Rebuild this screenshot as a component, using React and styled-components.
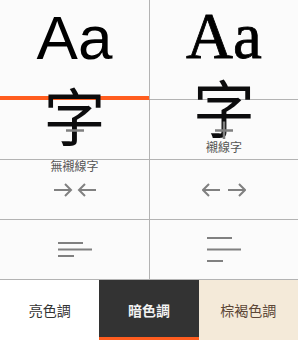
import React from "react";
import styled, { createGlobalStyle } from "styled-components";

const Global = createGlobalStyle`
  html, body { margin: 0; padding: 0; background: #fbfbfb; }
  body { font-family: "Noto Sans CJK TC", "Liberation Sans", sans-serif; }
  * { box-sizing: border-box; }
`;

const ORANGE = "#ff5d1f";
const LINE = "#b3b3b3";
const ICON = "#808080";

const Panel = styled.div`
  width: 298px;
  height: 340px;
  background: #fbfbfb;
  display: flex;
  flex-direction: column;
`;

const Grid = styled.div`
  display: grid;
  grid-template-columns: 150px 1fr;
  grid-template-rows: 100px 60px 60px 60px;
`;

const Cell = styled.button`
  appearance: none;
  margin: 0;
  padding: 0;
  background: transparent;
  font: inherit;
  color: inherit;
  border: none;
  border-bottom: 1px solid ${(p) => (p.$selected ? ORANGE : LINE)};
  border-right: ${(p) => (p.$left ? `1px solid ${LINE}` : "none")};
  box-shadow: ${(p) => (p.$selected ? `inset 0 -3px 0 ${ORANGE}` : "none")};
  display: flex;
  align-items: center;
  justify-content: center;
  overflow: visible;
  cursor: pointer;
`;

const FontCell = styled(Cell)`
  flex-direction: column;
  justify-content: flex-start;
  padding-top: ${(p) => (p.$serif ? "4px" : "6px")};
`;

const Latin = styled.div`
  font-family: ${(p) =>
    p.$serif ? '"Liberation Serif", serif' : '"Liberation Sans", sans-serif'};
  font-size: ${(p) => (p.$serif ? "65px" : "62px")};
  line-height: 64px;
  color: #000;
  -webkit-text-stroke: ${(p) => (p.$serif ? "0.8px #000" : "0")};
  white-space: nowrap;
`;

const Hanzi = styled.div`
  font-family: "Noto Sans CJK TC", sans-serif;
  font-size: 62px;
  line-height: 62px;
  color: #0c0c0d;
  margin-top: ${(p) => (p.$serif ? "7px" : "13px")};
`;

const FontLabel = styled.div`
  font-family: "Noto Sans CJK TC", sans-serif;
  font-size: 12px;
  line-height: 14px;
  color: #555;
  margin-top: ${(p) => (p.$serif ? "3px" : "14px")};
  white-space: nowrap;
`;

const Toolbar = styled.div`
  display: flex;
  height: 60px;
`;

const THEMES = {
  light: { bg: "#ffffff", fg: "#333333", weight: 400 },
  dark: { bg: "#333333", fg: "#f2f2f2", weight: 700 },
  sepia: { bg: "#f4ead9", fg: "#5b4636", weight: 400 },
};

const ThemeButton = styled.button`
  appearance: none;
  flex: 1;
  margin: 0;
  padding: 0;
  border: none;
  font-family: "Noto Sans CJK TC", sans-serif;
  font-size: 14px;
  font-weight: ${(p) => THEMES[p.$theme].weight};
  background: ${(p) => THEMES[p.$theme].bg};
  color: ${(p) => THEMES[p.$theme].fg};
  box-shadow: ${(p) => (p.$selected ? `inset 0 -3px 0 ${ORANGE}` : "none")};
  cursor: pointer;
`;

const Icon = styled.svg`
  display: block;
  stroke: ${ICON};
  stroke-width: 2;
  fill: none;
`;

const Minus = () => (
  <Icon width="18" height="18" viewBox="0 0 18 18">
    <path d="M0 9.5H18" strokeWidth="2.5" />
  </Icon>
);

const Plus = () => (
  <Icon width="18" height="18" viewBox="0 0 18 18">
    <path d="M0 9.5H18M9 0.5V18" strokeWidth="2.5" />
  </Icon>
);

const Narrow = () => (
  <Icon width="42" height="14" viewBox="0 0 42 14">
    <path d="M0 7H17M11 1L17 7L11 13" />
    <path d="M25 7H42M31 1L25 7L31 13" />
  </Icon>
);

const Wide = () => (
  <Icon width="44" height="16" viewBox="0 0 44 16">
    <path d="M1 8H18M7 2L1 8L7 14" />
    <path d="M26 8H43M37 2L43 8L37 14" />
  </Icon>
);

const Lines = ({ gap }) => (
  <Icon width="34" height={gap * 2 + 2} viewBox={`0 0 34 ${gap * 2 + 2}`}>
    <path d={`M0 1H25M0 ${1 + gap}H34M0 ${1 + gap * 2}H16`} />
  </Icon>
);

export default function App() {
  return (
    <>
      <Global />
      <Panel>
        <Grid>
          <FontCell $left $selected>
            <Latin>Aa</Latin>
            <Hanzi>字</Hanzi>
            <FontLabel>無襯線字</FontLabel>
          </FontCell>
          <FontCell $serif>
            <Latin $serif>Aa</Latin>
            <Hanzi $serif>字</Hanzi>
            <FontLabel $serif>襯線字</FontLabel>
          </FontCell>
          <Cell $left>
            <Minus />
          </Cell>
          <Cell>
            <Plus />
          </Cell>
          <Cell $left>
            <Narrow />
          </Cell>
          <Cell>
            <Wide />
          </Cell>
          <Cell $left>
            <Lines gap={6.5} />
          </Cell>
          <Cell>
            <Lines gap={11.5} />
          </Cell>
        </Grid>
        <Toolbar>
          <ThemeButton $theme="light">亮色調</ThemeButton>
          <ThemeButton $theme="dark" $selected>
            暗色調
          </ThemeButton>
          <ThemeButton $theme="sepia">棕褐色調</ThemeButton>
        </Toolbar>
      </Panel>
    </>
  );
}
